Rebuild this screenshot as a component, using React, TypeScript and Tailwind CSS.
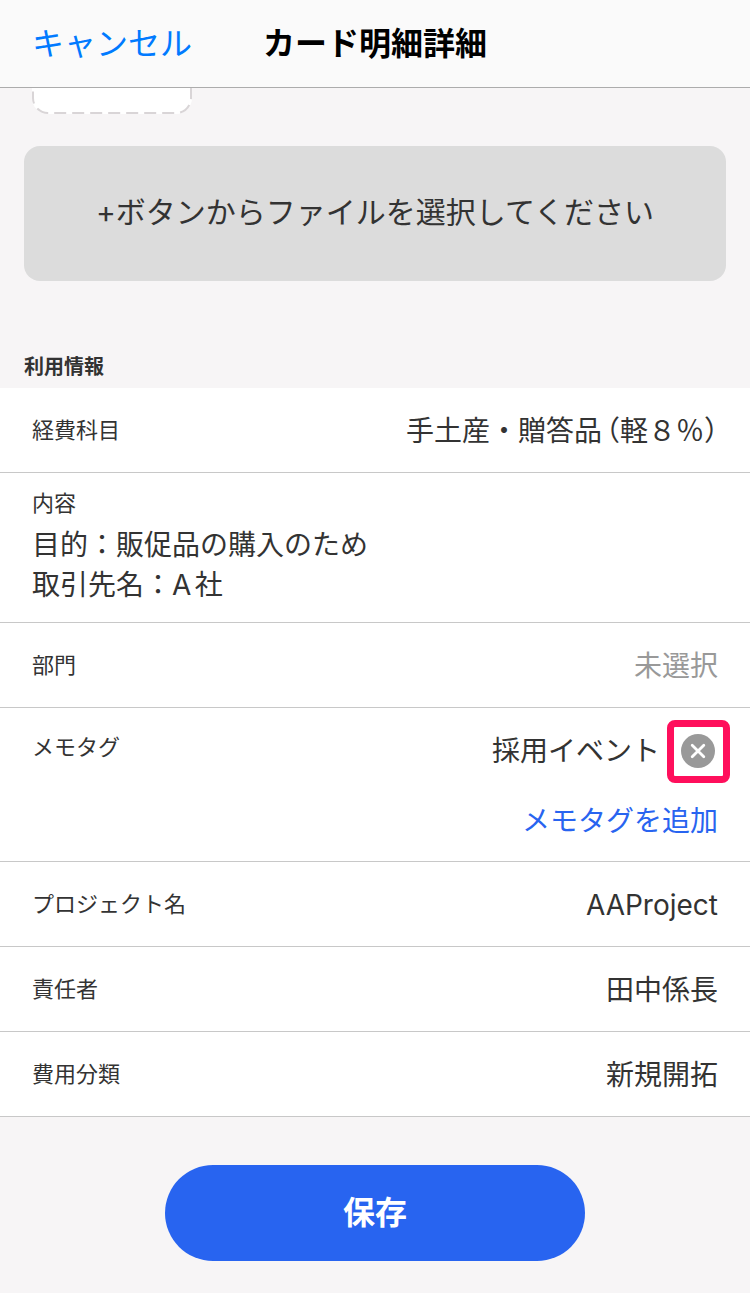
import type { ReactNode } from "react";

function Row({ label, children, muted = false }: { label: string; children: ReactNode; muted?: boolean }) {
  return (
    <li className="border-b border-[#c8c8c8]">
      <button type="button" className="flex w-full items-start justify-between px-8 pt-[23px] pb-[21px] text-left">
        <span className="pt-[3px] text-[22px] leading-8">{label}</span>
        <span className={muted ? "text-[28px] leading-10 text-[#999999]" : "text-[28px] leading-10"}>{children}</span>
      </button>
    </li>
  );
}

function ThumbnailSlot() {
  return (
    <svg viewBox="0 0 160 26" className="ml-2 block h-[26px] w-40" aria-hidden="true">
      <path d="M0 0V10A16 16 0 0 0 16 26H144A16 16 0 0 0 160 10V0Z" fill="#fff" />
      <path
        d="M1 0V10A15 15 0 0 0 16 25H144A15 15 0 0 0 159 10V0"
        fill="none"
        stroke="#d9d5d7"
        strokeWidth="2"
        strokeDasharray="12 6"
        strokeDashoffset="14.4"
      />
    </svg>
  );
}

function RemoveIcon() {
  return (
    <svg viewBox="0 0 34 34" className="size-[34px]" aria-hidden="true">
      <circle cx="17" cy="17" r="17" fill="#999999" />
      <path d="M11.2 11.2 22.8 22.8M22.8 11.2 11.2 22.8" stroke="#fff" strokeWidth="2.8" strokeLinecap="round" />
    </svg>
  );
}

export default function App() {
  return (
    <div className="min-h-screen bg-[#f7f5f6] font-['Inter','Noto_Sans_CJK_JP',sans-serif] text-[#333333] [text-autospace:normal]">
      <header className="grid h-[88px] grid-cols-[1fr_auto_1fr] items-center border-b border-[#acacac] bg-[#fafafa] px-8">
        <button type="button" className="justify-self-start text-[32px] leading-10 text-[#007aff]">
          キャンセル
        </button>
        <h1 className="text-[32px] leading-10 font-bold text-black">カード明細詳細</h1>
      </header>

      <main>
        <section className="px-6">
          <ThumbnailSlot />
          <p className="mt-8 rounded-2xl bg-[#dcdcdc] pt-[46px] pb-[49px] text-center text-[30px] leading-10">
            +ボタンからファイルを選択してください
          </p>
        </section>

        <section>
          <h2 className="mt-[71px] px-6 pb-1.5 text-[20px] leading-[30px] font-bold">利用情報</h2>
          <ul className="bg-white">
            <Row label="経費科目">
              手土産・贈答品
              <span className="ml-1 [font-feature-settings:'halt']">（</span>
              軽８％
              <span className="[font-feature-settings:'halt']">）</span>
            </Row>
            <li className="border-b border-[#c8c8c8] px-8 pt-[14px] pb-[17px]">
              <label htmlFor="detail" className="block text-[22px] leading-8">
                内容
              </label>
              <textarea
                id="detail"
                rows={2}
                defaultValue={"目的：販促品の購入のため\n取引先名：A社"}
                className="mt-1.5 block h-20 w-full resize-none overflow-hidden text-[28px] leading-10 outline-none"
              />
            </li>
            <Row label="部門" muted>
              未選択
            </Row>
            <li className="flex items-start justify-between border-b border-[#c8c8c8] px-8 pt-[23px] pb-5">
              <span className="text-[22px] leading-8">メモタグ</span>
              <div className="flex flex-col items-end gap-[30px]">
                <div className="flex items-center gap-[18px]">
                  <span className="text-[28px] leading-10">採用イベント</span>
                  <button
                    type="button"
                    aria-label="採用イベントを削除"
                    className="relative flex size-10 items-center justify-center"
                  >
                    <RemoveIcon />
                    <span className="absolute -top-[11px] -left-[11px] size-[63px] rounded-lg border-[7px] border-[#ff0f5c]" />
                  </button>
                </div>
                <button type="button" className="text-[28px] leading-10 text-[#2864f0]">
                  メモタグを追加
                </button>
              </div>
            </li>
            <Row label="プロジェクト名">AAProject</Row>
            <Row label="責任者">田中係長</Row>
            <Row label="費用分類">新規開拓</Row>
          </ul>
        </section>

        <div className="flex justify-center pt-12 pb-8">
          <button
            type="button"
            className="h-24 w-[420px] rounded-full bg-[#2864f0] text-[32px] leading-10 font-bold text-white"
          >
            保存
          </button>
        </div>
      </main>
    </div>
  );
}
